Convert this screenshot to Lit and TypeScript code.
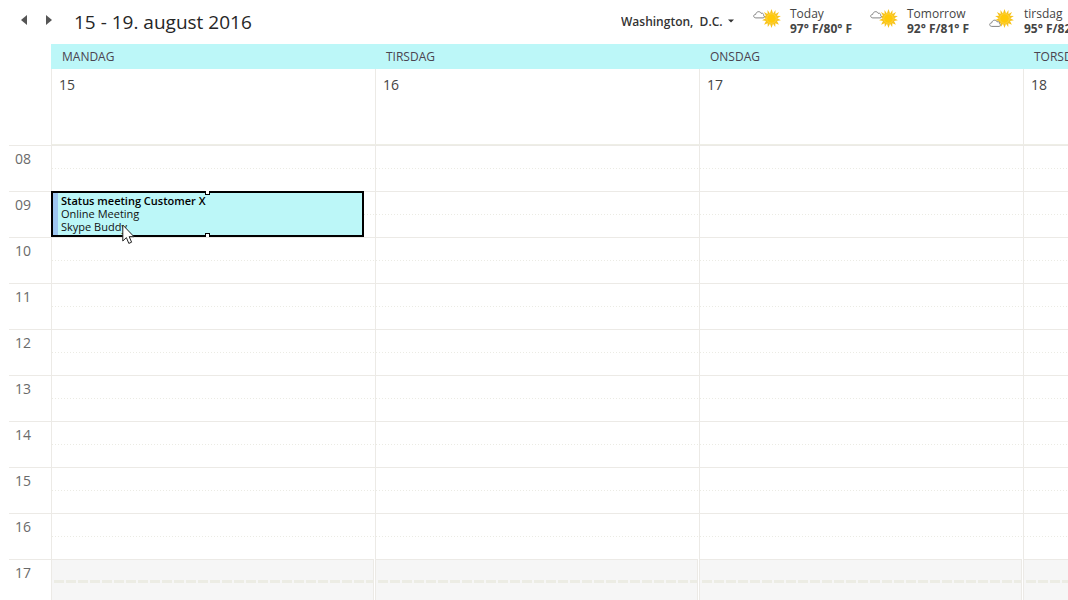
import { LitElement, html, css, svg } from "lit";
import { customElement, property } from "lit/decorators.js";
import { classMap } from "lit/directives/class-map.js";

interface Forecast {
  day: string;
  temps: string;
  cloud: "high" | "low";
}

const FORECASTS: Forecast[] = [
  { day: "Today", temps: "97° F/80° F", cloud: "high" },
  { day: "Tomorrow", temps: "92° F/81° F", cloud: "high" },
  { day: "tirsdag", temps: "95° F/82° F", cloud: "low" },
];

const DAYS = [
  { name: "MANDAG", date: "15" },
  { name: "TIRSDAG", date: "16" },
  { name: "ONSDAG", date: "17" },
  { name: "TORSDAG", date: "18" },
];

const HOURS = ["08", "09", "10", "11", "12", "13", "14", "15", "16", "17"];
const CLOSING_HOUR = 17;

@customElement("weather-icon")
export class WeatherIcon extends LitElement {
  @property() cloud: "high" | "low" = "high";

  static styles = css`
    :host {
      display: block;
      width: 28px;
      height: 20px;
    }
    svg {
      display: block;
    }
  `;

  render() {
    const high = this.cloud === "high";
    const cloudX = high ? 0 : 2;
    const cloudY = high ? 2 : 10.5;
    const sunX = high ? 18.5 : 17.5;
    return html`<svg width="28" height="20" viewBox="0 0 28 20" aria-hidden="true">
      ${svg`<g transform="translate(${sunX} 9.5)">
        <path fill="#f8c31a" d="M0-9.4 1.6-5 4-8.6 3.9-4.4 7.6-6.4 5.5-2.8 9.4-2.6 5.8-.3 9.4 1.8 5.5 2.6 7.4 6.2 3.9 4.7 3.7 8.6 1.5 5.3 0 9.4-1.5 5.3-3.7 8.6-3.9 4.7-7.4 6.2-5.5 2.6-9.4 1.8-5.8-.3-9.4-2.6-5.5-2.8-7.6-6.4-3.9-4.4-4-8.6-1.6-5Z"/>
        <circle r="4.8" fill="#ffc90a" stroke="#fcd95f" stroke-width=".6"/>
      </g>
      <g transform="translate(${cloudX} ${cloudY})">
        <path fill="#fff" stroke="#858585" stroke-width="1" d="M2.8 6.9C-.1 6.7.1 3.4 2.7 3.4 3.1.3 7.1-.3 8.1 2.3 10.2 1.7 11.1 3.6 10.5 4.3 12.1 5.2 11.3 6.9 10.1 6.9Z"/>
      </g>`}
    </svg>`;
  }
}

@customElement("app-root")
export class AppRoot extends LitElement {
  static styles = css`
    :host {
      display: flex;
      flex-direction: column;
      height: 100vh;
      overflow: hidden;
      background: #fff;
      color: #444;
      font-family: "Open Sans", "Noto Sans", sans-serif;
      font-size: 12px;
      line-height: 15px;
    }
    button,
    select {
      margin: 0;
      padding: 0;
      border: 0;
      background: none;
      color: inherit;
      font: inherit;
      text-align: left;
      appearance: none;
    }
    svg {
      display: block;
    }
    header {
      display: flex;
      flex: none;
      height: 44px;
      box-sizing: border-box;
      padding: 6px 0 0 20px;
      overflow: hidden;
      white-space: nowrap;
    }
    .pager {
      display: flex;
      gap: 16px;
      padding-top: 9px;
      height: 11px;
    }
    h1 {
      flex: 1 0 auto;
      margin: 0 0 0 22px;
      color: #262626;
      font-size: 19px;
      font-weight: 400;
      line-height: 32px;
    }
    .weather {
      display: flex;
      width: 447px;
      flex: none;
    }
    .place {
      display: flex;
      align-items: center;
      width: 132px;
      height: 30px;
      flex: none;
      gap: 5px;
      color: #333;
      font-weight: 600;
    }
    .forecast {
      display: flex;
      width: 117px;
      flex: none;
      gap: 9px;
    }
    .forecast p {
      margin: 0;
    }
    .forecast weather-icon {
      margin-top: 3px;
    }
    .forecast .temps {
      font-weight: 700;
    }
    .calendar {
      display: flex;
      flex: 1;
      min-height: 0;
      overflow: hidden;
    }
    .gutter {
      flex: none;
      width: 42px;
      padding: 101px 0 0 9px;
    }
    .hour {
      box-sizing: border-box;
      height: 46px;
      padding: 3px 6px;
      border-top: 1px solid #eceae6;
      color: #6a6a6a;
      font-size: 14px;
      line-height: 20px;
    }
    .days {
      display: grid;
      flex: 1;
      grid-auto-flow: column;
      grid-auto-columns: minmax(324px, 1fr);
      align-items: start;
    }
    .day {
      display: grid;
      grid-template-rows: 25px 76px;
      grid-auto-rows: 46px;
    }
    h2 {
      margin: 0;
      padding-left: 11px;
      background: #bcf7f8;
      color: #4b4450;
      font-size: 12px;
      font-weight: 400;
      line-height: 25px;
    }
    .all-day {
      padding: 6px 7px;
      border-left: 1px solid #eceae6;
      border-bottom: 1px solid #eeeee6;
      font-size: 14px;
      line-height: 20px;
    }
    .slot {
      grid-column: 1;
      border-top: 1px solid #eceae6;
      border-left: 1px solid #eceae6;
    }
    .slot::before {
      content: "";
      display: block;
      height: 23px;
      background: repeating-linear-gradient(90deg, #ebebe4 0 1px, transparent 1px 3px) bottom / 100% 1px
        no-repeat;
    }
    .slot.closed {
      background: #f6f6f6;
      border-right: 1px solid #eceae6;
      margin-right: 1px;
    }
    .slot.closed::before {
      background: repeating-linear-gradient(90deg, transparent 0 2px, #ecece4 2px 12px) bottom / 100% 3px
        no-repeat;
    }
    .event {
      display: flex;
      position: relative;
      grid-column: 1;
      flex-direction: column;
      margin-right: 11px;
      padding: 1px 0 0 3px;
      border: 2px solid #000;
      background: linear-gradient(90deg, #9ec6f0 5px, #bcf7f8 5px);
      color: #111;
      font-size: 11px;
      line-height: 13px;
    }
    .event span,
    .event strong {
      padding-left: 5px;
    }
    .event strong {
      color: #000;
      font-weight: 600;
    }
    .event::before,
    .event::after {
      content: "";
      position: absolute;
      left: calc(50% - 3px);
      width: 3px;
      height: 3px;
      border: 1px solid #000;
      background: #fff;
    }
    .event::before {
      top: -2px;
      border-top: 0;
    }
    .event::after {
      bottom: -2px;
      border-bottom: 0;
    }
    .pointer {
      position: absolute;
      left: 69px;
      top: 31px;
    }
  `;

  private renderArrow(label: string, points: string) {
    return html`<button aria-label=${label}>
      <svg width="8" height="11" viewBox="0 0 8 11"><polygon points=${points} fill="#555" /></svg>
    </button>`;
  }

  private renderEvent() {
    return html`<button class="event" style="grid-row: 4">
      <strong>Status meeting Customer X</strong>
      <span>Online Meeting</span>
      <span>Skype Buddy</span>
      <svg class="pointer" width="13" height="21" viewBox="0 0 13 21" aria-hidden="true">
        <path d="M.8 1V17L4.4 13.6 6.8 19.4 9.6 18.2 7.2 12.7H12Z" fill="#fff" stroke="#222" />
      </svg>
    </button>`;
  }

  render() {
    return html`
      <header>
        <nav class="pager">
          ${this.renderArrow("Previous", "7,0 7,10 1,5")}
          ${this.renderArrow("Next", "2,0 2,10 8,5")}
        </nav>
        <h1>15 - 19. august 2016</h1>
        <div class="weather">
          <label class="place">
            <select aria-label="Location">
              <option>Washington,&nbsp; D.C.</option>
            </select>
            <svg width="6" height="4" viewBox="0 0 6 4"><path d="M0 .5H6L3 3.5Z" fill="#333" /></svg>
          </label>
          ${FORECASTS.map(
            (f) => html`<div class="forecast">
              <weather-icon .cloud=${f.cloud}></weather-icon>
              <div>
                <p>${f.day}</p>
                <p class="temps">${f.temps}</p>
              </div>
            </div>`
          )}
        </div>
      </header>
      <main class="calendar">
        <div class="gutter">${HOURS.map((h) => html`<div class="hour">${h}</div>`)}</div>
        <div class="days">
          ${DAYS.map(
            (d, i) => html`<section class="day">
              <h2>${d.name}</h2>
              <div class="all-day">${d.date}</div>
              ${HOURS.map(
                (h, row) => html`<div
                  class=${classMap({ slot: true, closed: Number(h) >= CLOSING_HOUR })}
                  style="grid-row: ${row + 3}"
                ></div>`
              )}
              ${i === 0 ? this.renderEvent() : null}
            </section>`
          )}
        </div>
      </main>
    `;
  }
}
